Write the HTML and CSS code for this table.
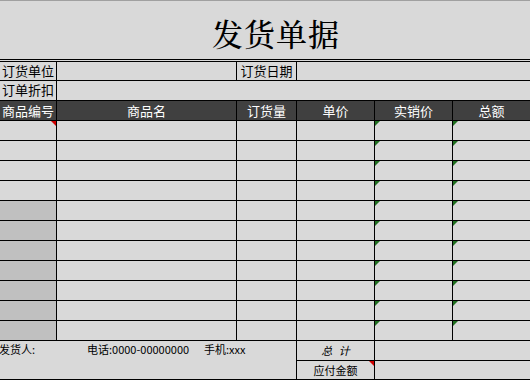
FILE: index.html
```html
<!DOCTYPE html>
<html lang="zh-CN">
<head>
<meta charset="utf-8">
<title>发货单据</title>
<link rel="stylesheet" href="styles.css">
</head>
<body>
<div class="sheet">
  <div class="title"><h1>发货单据</h1></div>
  <div class="grid">
    <div class="c lbl">订货单位</div>
    <div class="c"></div>
    <div class="c lbl center">订货日期</div>
    <div class="c span3"></div>

    <div class="c lbl">订单折扣</div>
    <div class="c span5"></div>

    <div class="c hd left">商品编号</div>
    <div class="c hd">商品名</div>
    <div class="c hd">订货量</div>
    <div class="c hd">单价</div>
    <div class="c hd">实销价</div>
    <div class="c hd">总额</div>

    <div class="c note"></div><div class="c"></div><div class="c"></div><div class="c"></div><div class="c g"></div><div class="c g"></div>
    <div class="c"></div><div class="c"></div><div class="c"></div><div class="c"></div><div class="c g"></div><div class="c g"></div>
    <div class="c"></div><div class="c"></div><div class="c"></div><div class="c"></div><div class="c g"></div><div class="c g"></div>
    <div class="c"></div><div class="c"></div><div class="c"></div><div class="c"></div><div class="c g"></div><div class="c g"></div>
    <div class="c dk"></div><div class="c"></div><div class="c"></div><div class="c"></div><div class="c g"></div><div class="c g"></div>
    <div class="c dk"></div><div class="c"></div><div class="c"></div><div class="c"></div><div class="c g"></div><div class="c g"></div>
    <div class="c dk"></div><div class="c"></div><div class="c"></div><div class="c"></div><div class="c g"></div><div class="c g"></div>
    <div class="c dk"></div><div class="c"></div><div class="c"></div><div class="c"></div><div class="c g"></div><div class="c g"></div>
    <div class="c dk"></div><div class="c"></div><div class="c"></div><div class="c"></div><div class="c g"></div><div class="c g"></div>
    <div class="c dk"></div><div class="c"></div><div class="c"></div><div class="c"></div><div class="c g"></div><div class="c g"></div>
    <div class="c dk"></div><div class="c"></div><div class="c"></div><div class="c"></div><div class="c g"></div><div class="c g"></div>

    <div class="c foot">
      <span class="sender">发货人:</span>
      <span class="phone">电话:0000-00000000</span>
      <span class="mobile">手机:xxx</span>
    </div>
    <div class="c center total">总 计</div>
    <div class="c span2"></div>
    <div class="c center small note2">应付金额</div>
    <div class="c span2"></div>
  </div>
</div>
</body>
</html>
```

FILE: styles.css
```css
* { box-sizing: border-box; }
html, body { margin: 0; padding: 0; background: #d9d9d9; }
body {
  width: 530px;
  height: 380px;
  overflow: hidden;
  font-family: "Noto Sans CJK SC", "Liberation Sans", sans-serif;
  color: #000;
}
.sheet { width: 530px; }
.title {
  height: 62px;
  border-top: 1px solid #a0a0a0;
  border-bottom: 3px double #000;
  display: flex;
  align-items: center;
  justify-content: center;
  padding-left: 22px;
}
.title h1 {
  margin: 0;
  font-family: "Noto Serif CJK SC", "Noto Sans CJK SC", serif;
  font-weight: 500;
  font-size: 31px;
  letter-spacing: 1px;
  line-height: 1;
  padding-top: 4px;
}
.grid {
  display: grid;
  grid-template-columns: 56px 179px 59px 77px 77px 77px;
  grid-template-rows: 18px 19px 19px repeat(11, 19px) 19px 18px;
  column-gap: 1px;
  row-gap: 1px;
  padding-bottom: 1px;
  background: #000;
}
.c {
  background: #d9d9d9;
  position: relative;
  font-size: 13px;
  line-height: 19px;
  white-space: nowrap;
  overflow: hidden;
}
.lbl { padding-left: 2px; line-height: 18px; }
.center { text-align: center; padding-left: 0; }
.span2 { grid-column: span 2; }
.span3 { grid-column: span 3; }
.span5 { grid-column: span 5; }
.hd {
  background: #404040;
  color: #fff;
  text-align: center;
}
.hd.left { text-align: left; padding-left: 2px; }
.dk { background: #c0c0c0; }
.g::before {
  content: "";
  position: absolute;
  top: 0;
  left: 0;
  border-top: 5px solid #1f6e1f;
  border-right: 5px solid transparent;
}
.note::after, .note2::after {
  content: "";
  position: absolute;
  top: 0;
  right: 0;
  border-top: 5px solid #d00000;
  border-left: 5px solid transparent;
}
.foot {
  grid-column: span 3;
  grid-row: span 2;
  display: flex;
  align-items: flex-start;
  font-size: 11px;
  line-height: 17px;
}
.sender { margin-left: -1px; width: 88px; }
.phone { width: 117px; }
.total { font-style: italic; font-size: 11px; line-height: 19px; word-spacing: 4px; }
.small { font-size: 11px; line-height: 18px; }
```
